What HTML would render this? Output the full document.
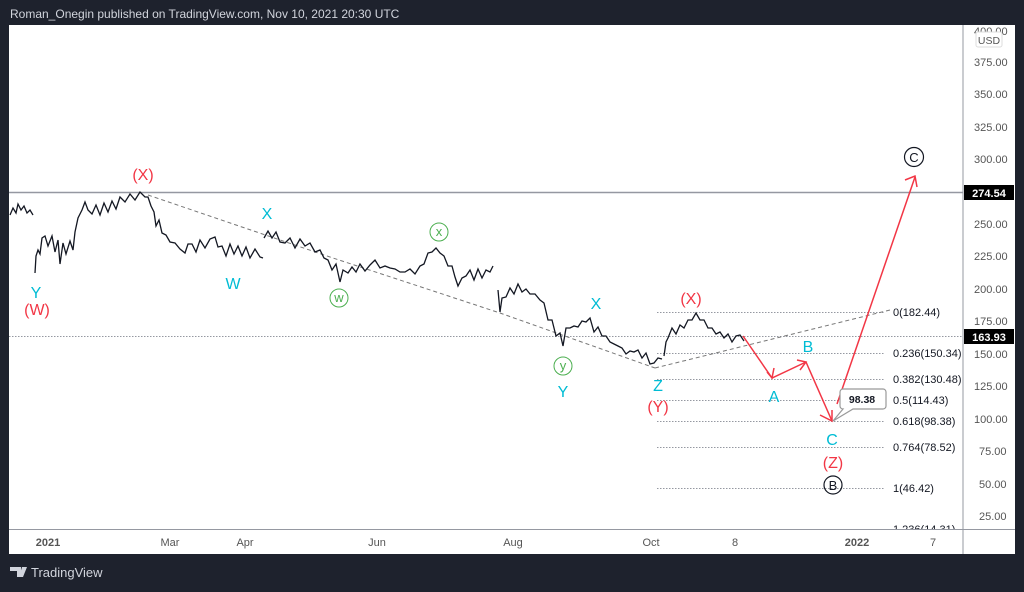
<!DOCTYPE html>
<html><head><meta charset="utf-8"><style>
body{margin:0;width:1024px;height:587px;background:#1e222d;overflow:hidden;font-family:"Liberation Sans",sans-serif}
</style></head><body>
<svg width="1024" height="587" viewBox="0 0 1024 587" xmlns="http://www.w3.org/2000/svg" font-family="Liberation Sans, sans-serif">
<defs><clipPath id="c"><rect x="9" y="25" width="954" height="504"/></clipPath></defs>
<rect x="0" y="0" width="1024" height="587" fill="#1e222d"/>
<text x="10" y="18" fill="#d1d4dc" font-size="12">Roman_Onegin published on TradingView.com, Nov 10, 2021 20:30 UTC</text>
<rect x="9" y="25" width="1006" height="529" fill="#fff"/>
<line x1="963" y1="25" x2="963" y2="554" stroke="#9598a1" stroke-width="1"/>
<line x1="9" y1="529.5" x2="1015" y2="529.5" stroke="#9598a1" stroke-width="1"/>
<g clip-path="url(#c)">
<line x1="9" y1="192.5" x2="963" y2="192.5" stroke="#9598a1" stroke-width="1.5"/>
<line x1="9" y1="336.5" x2="963" y2="336.5" stroke="#9598a1" stroke-width="1" stroke-dasharray="1.5,1.5"/>
<g stroke="#9598a1" stroke-width="1" stroke-dasharray="1.5,1.5">
<line x1="657" y1="312.5" x2="885" y2="312.5"/>
<line x1="657" y1="353.5" x2="885" y2="353.5"/>
<line x1="657" y1="379.5" x2="885" y2="379.5"/>
<line x1="657" y1="400.5" x2="885" y2="400.5"/>
<line x1="657" y1="421.5" x2="885" y2="421.5"/>
<line x1="657" y1="447.5" x2="885" y2="447.5"/>
<line x1="657" y1="488.5" x2="885" y2="488.5"/>
</g>
<g font-size="11" fill="#131722">
<text x="893" y="316">0(182.44)</text>
<text x="893" y="357">0.236(150.34)</text>
<text x="893" y="383">0.382(130.48)</text>
<text x="893" y="404">0.5(114.43)</text>
<text x="893" y="425">0.618(98.38)</text>
<text x="893" y="451">0.764(78.52)</text>
<text x="893" y="492">1(46.42)</text>
<text x="893" y="533">1.236(14.31)</text>
</g>
<g stroke="#777" stroke-width="1" stroke-dasharray="4,3" fill="none">
<polyline points="148,195 330,257 500,313 655,368"/>
<line x1="655" y1="368" x2="890" y2="310"/>
</g>
<g stroke="#131722" stroke-width="1.3" fill="none">
<polyline points="10,215 13,208 16,213 18,204 21,210 24,206 27,213 30,210 33,215"/>
<polyline points="35,273 36,256 38,250 40,254 42,238 45,236 48,246 52,236 55,252 58,240 60,264 63,243 66,254 70,241 73,250 75,232 78,218 82,210 85,202 88,210 92,214 96,205 100,215 104,203 108,212 112,201 116,209 120,197 125,202 130,194 135,200 140,192 145,197 148,197 151,206 154,212 156,226 159,220 162,233 166,235 170,242 175,243 180,249 185,253 188,244 192,244 196,252 200,240 205,248 210,239 215,237 218,247 222,246 226,256 230,244 234,254 238,246 242,256 246,247 250,258 255,249 260,257 263,258"/>
<polyline points="264,238 268,231 272,238 276,232 280,242 285,243 290,238 295,248 300,239 305,246 310,243 315,252 320,250 324,258 328,260 332,270 336,264 340,282 343,270 348,273 352,267 356,272 360,264 365,271 370,265 375,260 380,268 385,266 390,268 395,269 400,272 405,272 410,269 415,274 420,266 424,264 428,253 432,252 436,248 440,253 444,256 448,266 452,266 455,277 458,286 462,278 466,276 470,270 474,280 478,269 482,278 486,270 490,272 493,266"/>
<polyline points="498,290 500,312 502,298 506,297 510,288 514,294 518,284 522,292 526,289 530,294 535,294 540,300 544,303 548,320 552,320 556,336 560,333 563,346 566,328 570,328 574,326 578,327 582,321 586,322 590,318 594,332 598,327 602,336 606,336 610,342 614,344 618,346 622,348 626,354 630,351 634,352 638,350 642,358 646,353 650,364 654,363 658,358 662,359"/>
<polyline points="664,356 666,342 668,338 672,328 676,334 680,325 684,328 688,320 692,320 696,313 700,320 704,320 708,328 712,328 716,334 720,332 724,338 728,334 732,342 736,336 740,335 744,341"/>
</g>
</g>
<g stroke="#f23645" stroke-width="1.5" fill="none">
<polyline points="743,336 772,378 806,362"/>
<polyline points="767,372 772,378 774,368"/>
<polyline points="797,360 806,362 800,370"/>
<line x1="806" y1="362" x2="832" y2="421"/>
<polyline points="820,415 832,421 832,410"/>
<line x1="837" y1="404" x2="915" y2="177"/>
<polyline points="905,180 915,176 917,187"/>
</g>
<path d="M843 389 h40 a3 3 0 0 1 3 3 v14 a3 3 0 0 1 -3 3 h-30 l-20 12 l10 -12 a3 3 0 0 1 -3 -3 v-14 a3 3 0 0 1 3 -3z" fill="#fff" stroke="#999" stroke-width="1.2"/>
<text x="862" y="403" font-size="10.5" fill="#131722" text-anchor="middle" font-weight="bold">98.38</text>
<g font-size="16" text-anchor="middle">
<text x="143" y="180" fill="#f23645">(X)</text>
<text x="36" y="298" fill="#00bcd4">Y</text>
<text x="37" y="315" fill="#f23645">(W)</text>
<text x="267" y="219" fill="#00bcd4">X</text>
<text x="233" y="289" fill="#00bcd4">W</text>
<text x="596" y="309" fill="#00bcd4">X</text>
<text x="563" y="397" fill="#00bcd4">Y</text>
<text x="658" y="391" fill="#00bcd4">Z</text>
<text x="658" y="412" fill="#f23645">(Y)</text>
<text x="691" y="304" fill="#f23645">(X)</text>
<text x="774" y="402" fill="#00bcd4">A</text>
<text x="808" y="352" fill="#00bcd4">B</text>
<text x="832" y="445" fill="#00bcd4">C</text>
<text x="833" y="468" fill="#f23645">(Z)</text>
</g>
<g fill="none" stroke="#4caf50" stroke-width="1">
<circle cx="439" cy="232" r="9"/><circle cx="339" cy="298" r="9"/><circle cx="563" cy="366" r="9"/>
</g>
<g font-size="13" fill="#4caf50" text-anchor="middle">
<text x="439" y="236">x</text><text x="339" y="302">w</text><text x="563" y="370">y</text>
</g>
<circle cx="833" cy="485" r="9" fill="none" stroke="#131722" stroke-width="1.2"/>
<text x="833" y="490" font-size="13" text-anchor="middle" fill="#131722">B</text>
<circle cx="914" cy="157" r="9.5" fill="none" stroke="#131722" stroke-width="1.2"/>
<text x="914" y="162" font-size="13" text-anchor="middle" fill="#131722">C</text>
<g font-size="11" fill="#555">
<text x="974" y="35">400.00</text>
<text x="974" y="66">375.00</text>
<text x="974" y="98">350.00</text>
<text x="974" y="131">325.00</text>
<text x="974" y="163">300.00</text>
<text x="974" y="228">250.00</text>
<text x="974" y="260">225.00</text>
<text x="974" y="293">200.00</text>
<text x="974" y="325">175.00</text>
<text x="974" y="358">150.00</text>
<text x="974" y="390">125.00</text>
<text x="974" y="423">100.00</text>
<text x="979" y="455">75.00</text>
<text x="979" y="488">50.00</text>
<text x="979" y="520">25.00</text>
</g>
<rect x="976" y="32" width="26" height="15" rx="2" fill="#fff" stroke="#ddd"/>
<text x="989" y="44" font-size="10.5" fill="#555" text-anchor="middle">USD</text>
<rect x="964" y="185" width="50" height="15" fill="#000"/>
<text x="989" y="197" font-size="11" fill="#fff" font-weight="bold" text-anchor="middle">274.54</text>
<rect x="964" y="329" width="50" height="15" fill="#000"/>
<text x="989" y="341" font-size="11" fill="#fff" font-weight="bold" text-anchor="middle">163.93</text>
<g font-size="11" fill="#555" text-anchor="middle">
<text x="48" y="546" font-weight="bold">2021</text>
<text x="170" y="546">Mar</text>
<text x="245" y="546">Apr</text>
<text x="377" y="546">Jun</text>
<text x="513" y="546">Aug</text>
<text x="651" y="546">Oct</text>
<text x="735" y="546">8</text>
<text x="857" y="546" font-weight="bold">2022</text>
<text x="933" y="546">7</text>
</g>
<path d="M10 567 h11 v10 h-4 v-6 h-7z M22 567 h5 l-4 10 h-4z" fill="#d1d4dc"/>
<circle cx="24" cy="569" r="1.8" fill="#d1d4dc"/>
<text x="31" y="577" font-size="13" fill="#d1d4dc">TradingView</text>
</svg>
</body></html>
